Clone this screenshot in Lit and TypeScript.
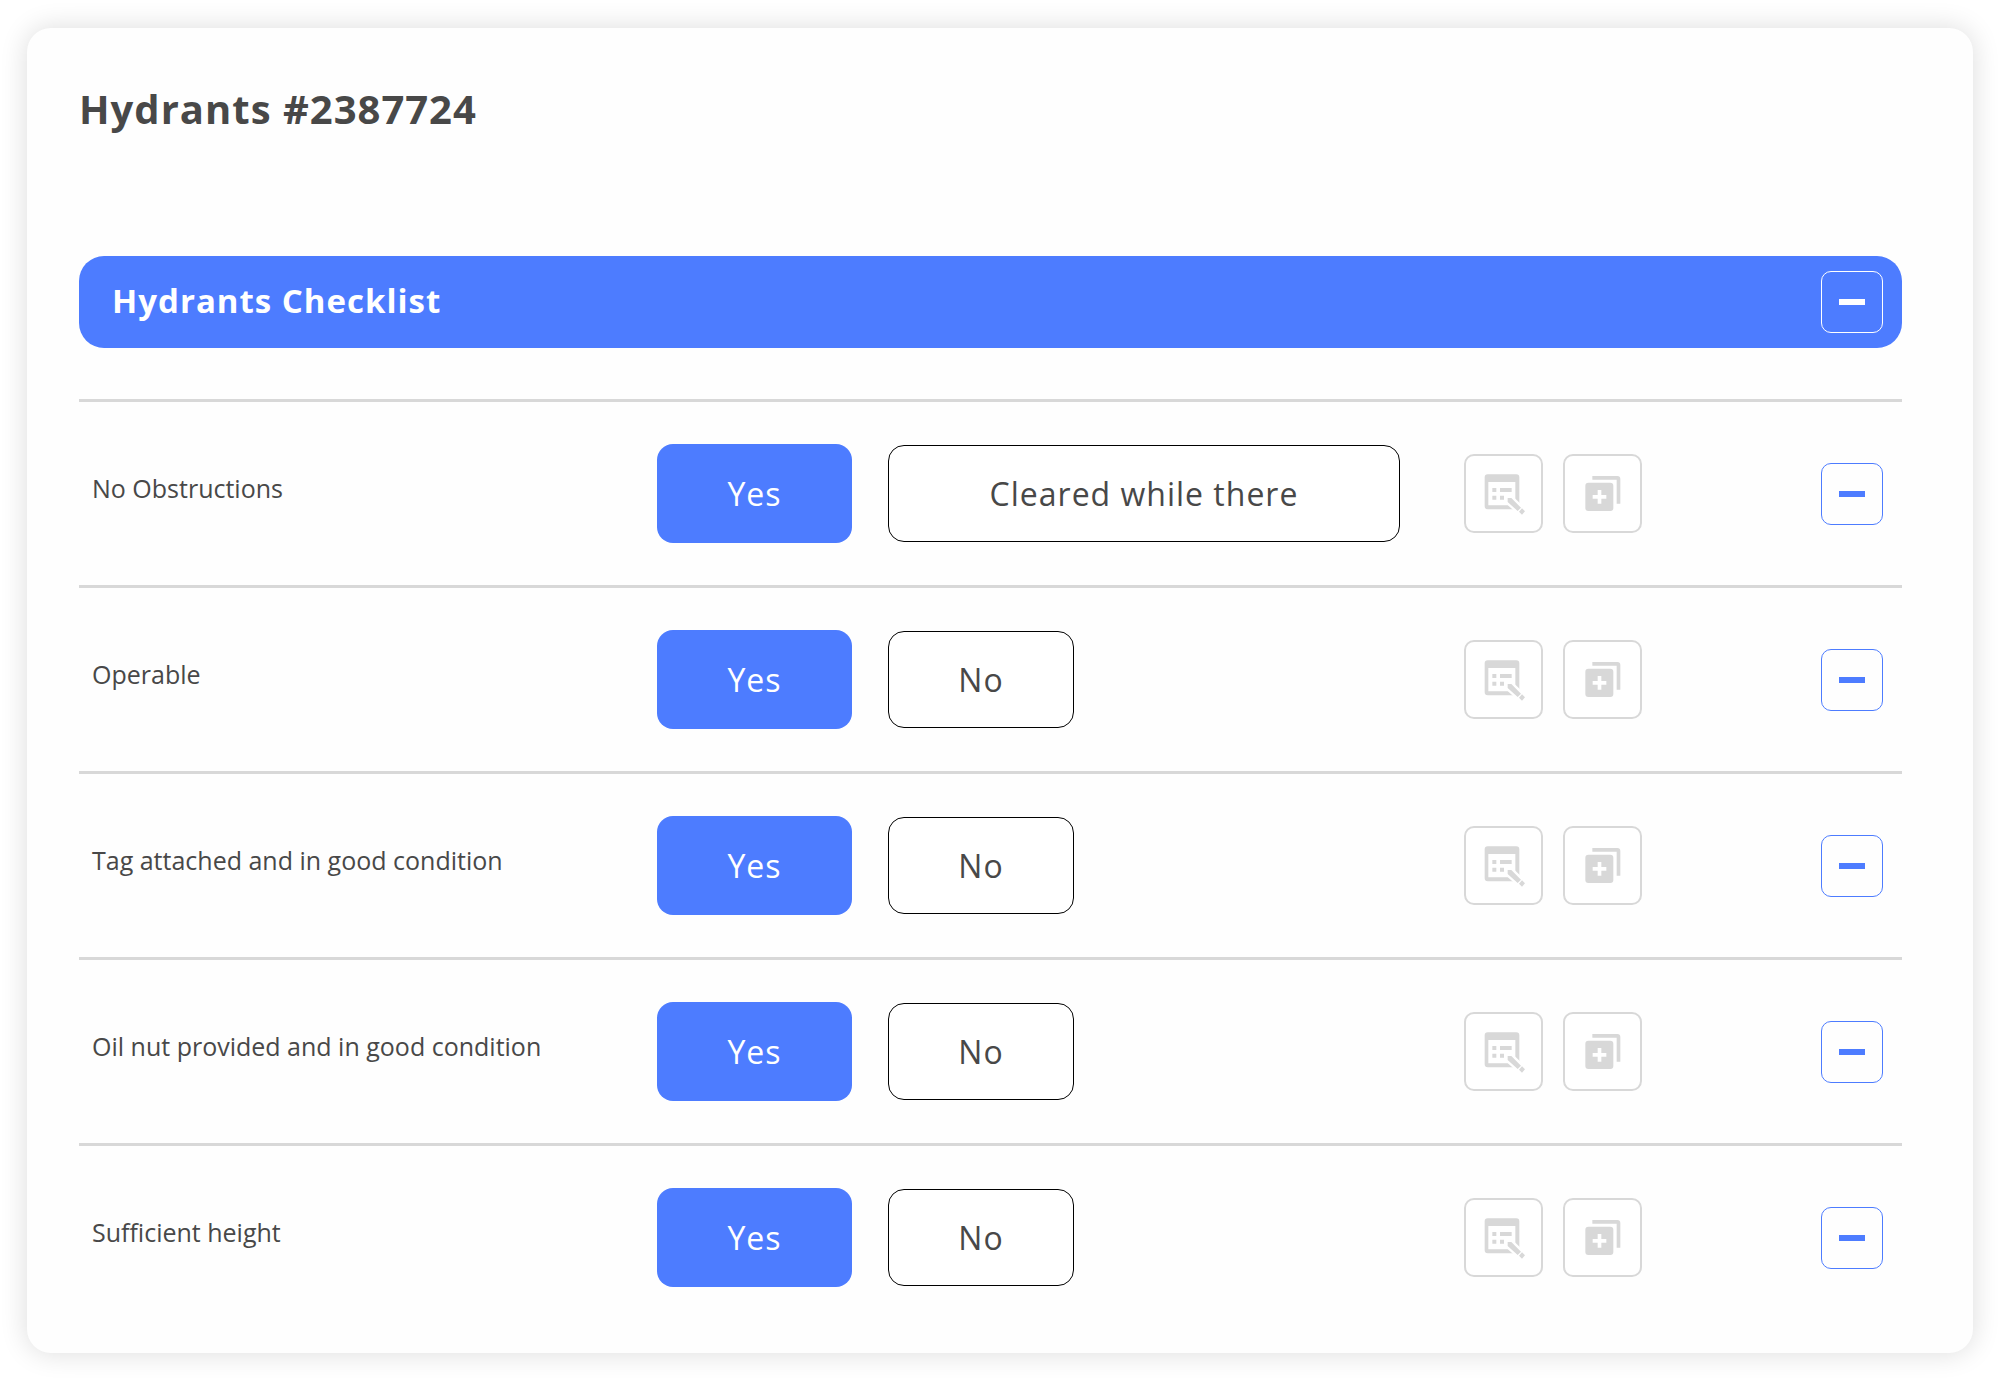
import { LitElement, html, css, svg } from "lit";
import { customElement, property, state } from "lit/decorators.js";
import { classMap } from "lit/directives/class-map.js";

interface ChecklistItem {
  label: string;
  options: string[];
  selected: number;
}

// Form window with a pencil over its lower right corner.
const noteIcon = svg`
  <path fill-rule="evenodd" d="M113 103H199a9 9 0 0 1 9 9V199a9 9 0 0 1-9 9H113a9 9 0 0 1-9-9V112a9 9 0 0 1 9-9ZM115 126V196H196V126Z"/>
  <path d="M127 144h12v12h-12ZM150 144h35v12h-35ZM127 167h12v12h-12ZM150 167h12v12h-12Z"/>
  <path class="halo" d="M173 174H184L225 214L216 224L173 186Z"/>
  <path d="M173 174H184L213 203L203 213L173 186ZM216 205L225 214L216 224L207 215Z"/>`;

// Two stacked sheets, the front one holding a plus.
const addCopyIcon = svg`
  <path d="M426 108H501a9 9 0 0 1 9 9V191H499V119H426Z"/>
  <path fill-rule="evenodd" d="M414 128H480a9 9 0 0 1 9 9V204a9 9 0 0 1-9 9H414a9 9 0 0 1-9-9V137a9 9 0 0 1 9-9ZM442 150V165H427V176H442V191H453V176H468V165H453V150Z"/>`;

@customElement("collapse-button")
export class CollapseButton extends LitElement {
  @property() label = "Collapse";

  static styles = css`
    :host {
      display: block;
      flex: none;
    }
    .toggle {
      display: grid;
      place-items: center;
      box-sizing: border-box;
      width: 62px;
      height: 62px;
      padding: 0;
      border: 1px solid currentColor;
      border-radius: 10px;
      background: none;
      color: inherit;
      cursor: pointer;
    }
    .dash {
      width: 26px;
      height: 6px;
      background: currentColor;
    }
  `;

  render() {
    return html`<button class="toggle" type="button" aria-label=${this.label}>
      <span class="dash"></span>
    </button>`;
  }
}

@customElement("checklist-row")
export class ChecklistRow extends LitElement {
  @property({ attribute: false }) item!: ChecklistItem;
  @state() private selected = 0;

  static styles = css`
    :host {
      display: grid;
      grid-template-columns: 578fr 807fr 438fr;
      align-items: center;
      box-sizing: border-box;
      min-height: 186px;
      border-top: 3px solid #d8d8d8;
    }
    .label {
      padding: 0 13px 12px;
      font-size: 25px;
      line-height: 36px;
    }
    .options {
      display: flex;
      align-items: center;
      gap: 36px;
    }
    .option {
      box-sizing: border-box;
      min-width: 186px;
      height: 97px;
      padding: 0;
      border: 1px solid #000;
      border-radius: 16px;
      background: #fff;
      color: #484848;
      font: inherit;
      font-size: 32px;
      letter-spacing: 1px;
      cursor: pointer;
    }
    .option.wide {
      min-width: 512px;
    }
    .option.selected {
      min-width: 195px;
      height: 99px;
      border: 0;
      background: #4d7cff;
      color: #fff;
    }
    .actions {
      display: flex;
      align-items: center;
      gap: 20px;
      padding-right: 19px;
    }
    .action {
      display: grid;
      place-items: center;
      box-sizing: border-box;
      width: 79px;
      height: 79px;
      padding: 0;
      border: 2px solid #d8d8d8;
      border-radius: 10px;
      background: #fff;
      cursor: pointer;
    }
    .icon {
      width: 45px;
      height: 45px;
      fill: #d8d8d8;
    }
    .halo {
      fill: #fff;
      stroke: #fff;
      stroke-width: 14;
    }
    .collapse {
      margin-left: auto;
      color: #4d7cff;
    }
  `;

  willUpdate(changed: Map<string, unknown>) {
    if (changed.has("item")) this.selected = this.item.selected;
  }

  render() {
    const { label, options } = this.item;
    return html`
      <div class="label" id="label">${label}</div>
      <div class="options" role="group" aria-labelledby="label">
        ${options.map(
          (text, i) => html`<button
            type="button"
            class=${classMap({
              option: true,
              selected: i === this.selected,
              wide: text.length > 10,
            })}
            aria-pressed=${i === this.selected ? "true" : "false"}
            @click=${() => (this.selected = i)}
          >${text}</button>`
        )}
      </div>
      <div class="actions">
        <button class="action" type="button" aria-label="Edit note">
          <svg class="icon" viewBox="93 93 135 135" aria-hidden="true">${noteIcon}</svg>
        </button>
        <button class="action" type="button" aria-label="Add attachment">
          <svg class="icon" viewBox="389 93 135 135" aria-hidden="true">${addCopyIcon}</svg>
        </button>
        <collapse-button class="collapse" label="Collapse item"></collapse-button>
      </div>
    `;
  }
}

@customElement("app-root")
export class AppRoot extends LitElement {
  private items: ChecklistItem[] = [
    { label: "No Obstructions", options: ["Yes", "Cleared while there"], selected: 0 },
    { label: "Operable", options: ["Yes", "No"], selected: 0 },
    { label: "Tag attached and in good condition", options: ["Yes", "No"], selected: 0 },
    { label: "Oil nut provided and in good condition", options: ["Yes", "No"], selected: 0 },
    { label: "Sufficient height", options: ["Yes", "No"], selected: 0 },
  ];

  static styles = css`
    :host {
      display: block;
      padding: 28px 27px;
      background: #fff;
      color: #484848;
      font-family: "Open Sans", "Noto Sans", sans-serif;
    }
    .card {
      padding: 53px 71px 24px 52px;
      border-radius: 24px;
      background: #fefefe;
      box-shadow: 0 0 28px rgba(0, 0, 0, 0.14);
    }
    .title {
      margin: 0 0 119px;
      font-size: 40px;
      line-height: 56px;
      font-weight: 700;
      letter-spacing: 1px;
    }
    .section {
      display: flex;
      align-items: center;
      justify-content: space-between;
      box-sizing: border-box;
      min-height: 92px;
      margin-bottom: 51px;
      padding: 0 19px 0 33px;
      border-radius: 25px;
      background: #4d7cff;
      color: #fff;
    }
    .heading {
      margin: 0;
      padding-bottom: 2px;
      font-size: 33px;
      line-height: 44px;
      font-weight: 700;
      letter-spacing: 1px;
    }
    .list {
      margin: 0;
      padding: 0;
      list-style: none;
    }
  `;

  render() {
    return html`
      <main class="card">
        <h1 class="title">Hydrants #2387724</h1>
        <header class="section">
          <h2 class="heading">Hydrants Checklist</h2>
          <collapse-button label="Collapse checklist"></collapse-button>
        </header>
        <ul class="list">
          ${this.items.map(
            (item) => html`<li><checklist-row .item=${item}></checklist-row></li>`
          )}
        </ul>
      </main>
    `;
  }
}
